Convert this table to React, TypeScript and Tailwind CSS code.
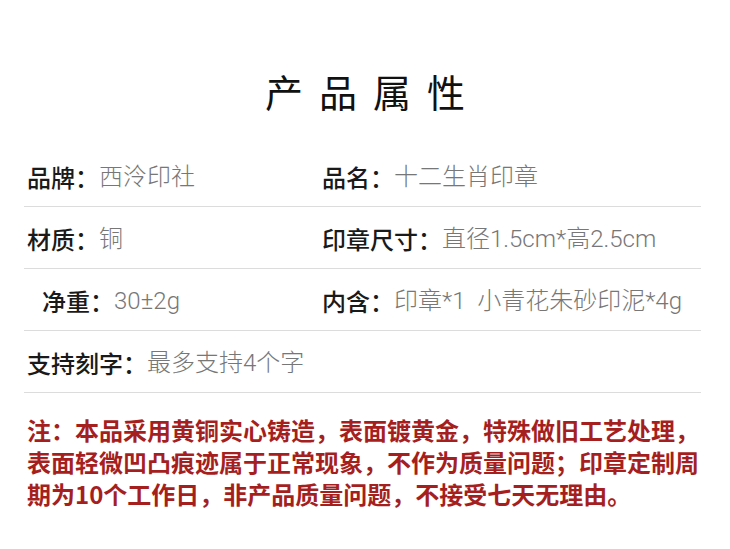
const font = {
  fontFamily: '"Noto Sans CJK SC", "Noto Sans", sans-serif',
};

const valueFont = {
  fontFamily: 'Roboto, "Noto Sans CJK SC", sans-serif',
};

const Row = ({
  children,
}: {
  children: React.ReactNode;
}) => (
  <div className="flex items-center h-[62px] pt-[3px] border-b border-[#dcdcdc]">
    {children}
  </div>
);

const Cell = ({
  label,
  value,
  className = "",
}: {
  label: string;
  value: string;
  className?: string;
}) => (
  <div className={"flex items-center whitespace-pre text-[24px] leading-none " + className}>
    <span className="text-[#1a1a1a] font-medium">{label}</span>
    <span className="text-[#777777] font-light" style={valueFont}>
      {value}
    </span>
  </div>
);

export default function App() {
  return (
    <div className="w-[730px] h-[549px] bg-white overflow-hidden" style={font}>
      <h1 className="pt-[66px] h-[145px] text-center text-[38px] leading-[50px] font-normal tracking-[16px] pl-[16px] text-[#111]">
        产品属性
      </h1>
      <div className="mx-6 w-[677px]">
        <Row>
          <Cell label="品牌：" value="西泠印社" className="w-[298px] pl-[3px]" />
          <Cell label="品名：" value="十二生肖印章" />
        </Row>
        <Row>
          <Cell label="材质：" value="铜" className="w-[298px] pl-[3px]" />
          <Cell label="印章尺寸：" value="直径1.5cm*高2.5cm" />
        </Row>
        <Row>
          <Cell label="净重：" value="30±2g" className="w-[298px] pl-[18px]" />
          <Cell label="内含：" value="印章*1  小青花朱砂印泥*4g" />
        </Row>
        <Row>
          <Cell label="支持刻字：" value="最多支持4个字" className="pl-[3px]" />
        </Row>
      </div>
      <p className="mt-[21px] pl-[27px] text-[24px] leading-[32px] font-bold text-[#a61f1f] whitespace-nowrap">
        注：本品采用黄铜实心铸造，表面镀黄金，特殊做旧工艺处理，
        <br />
        表面轻微凹凸痕迹属于正常现象，不作为质量问题；印章定制周
        <br />
        期为10个工作日，非产品质量问题，不接受七天无理由。
      </p>
    </div>
  );
}
